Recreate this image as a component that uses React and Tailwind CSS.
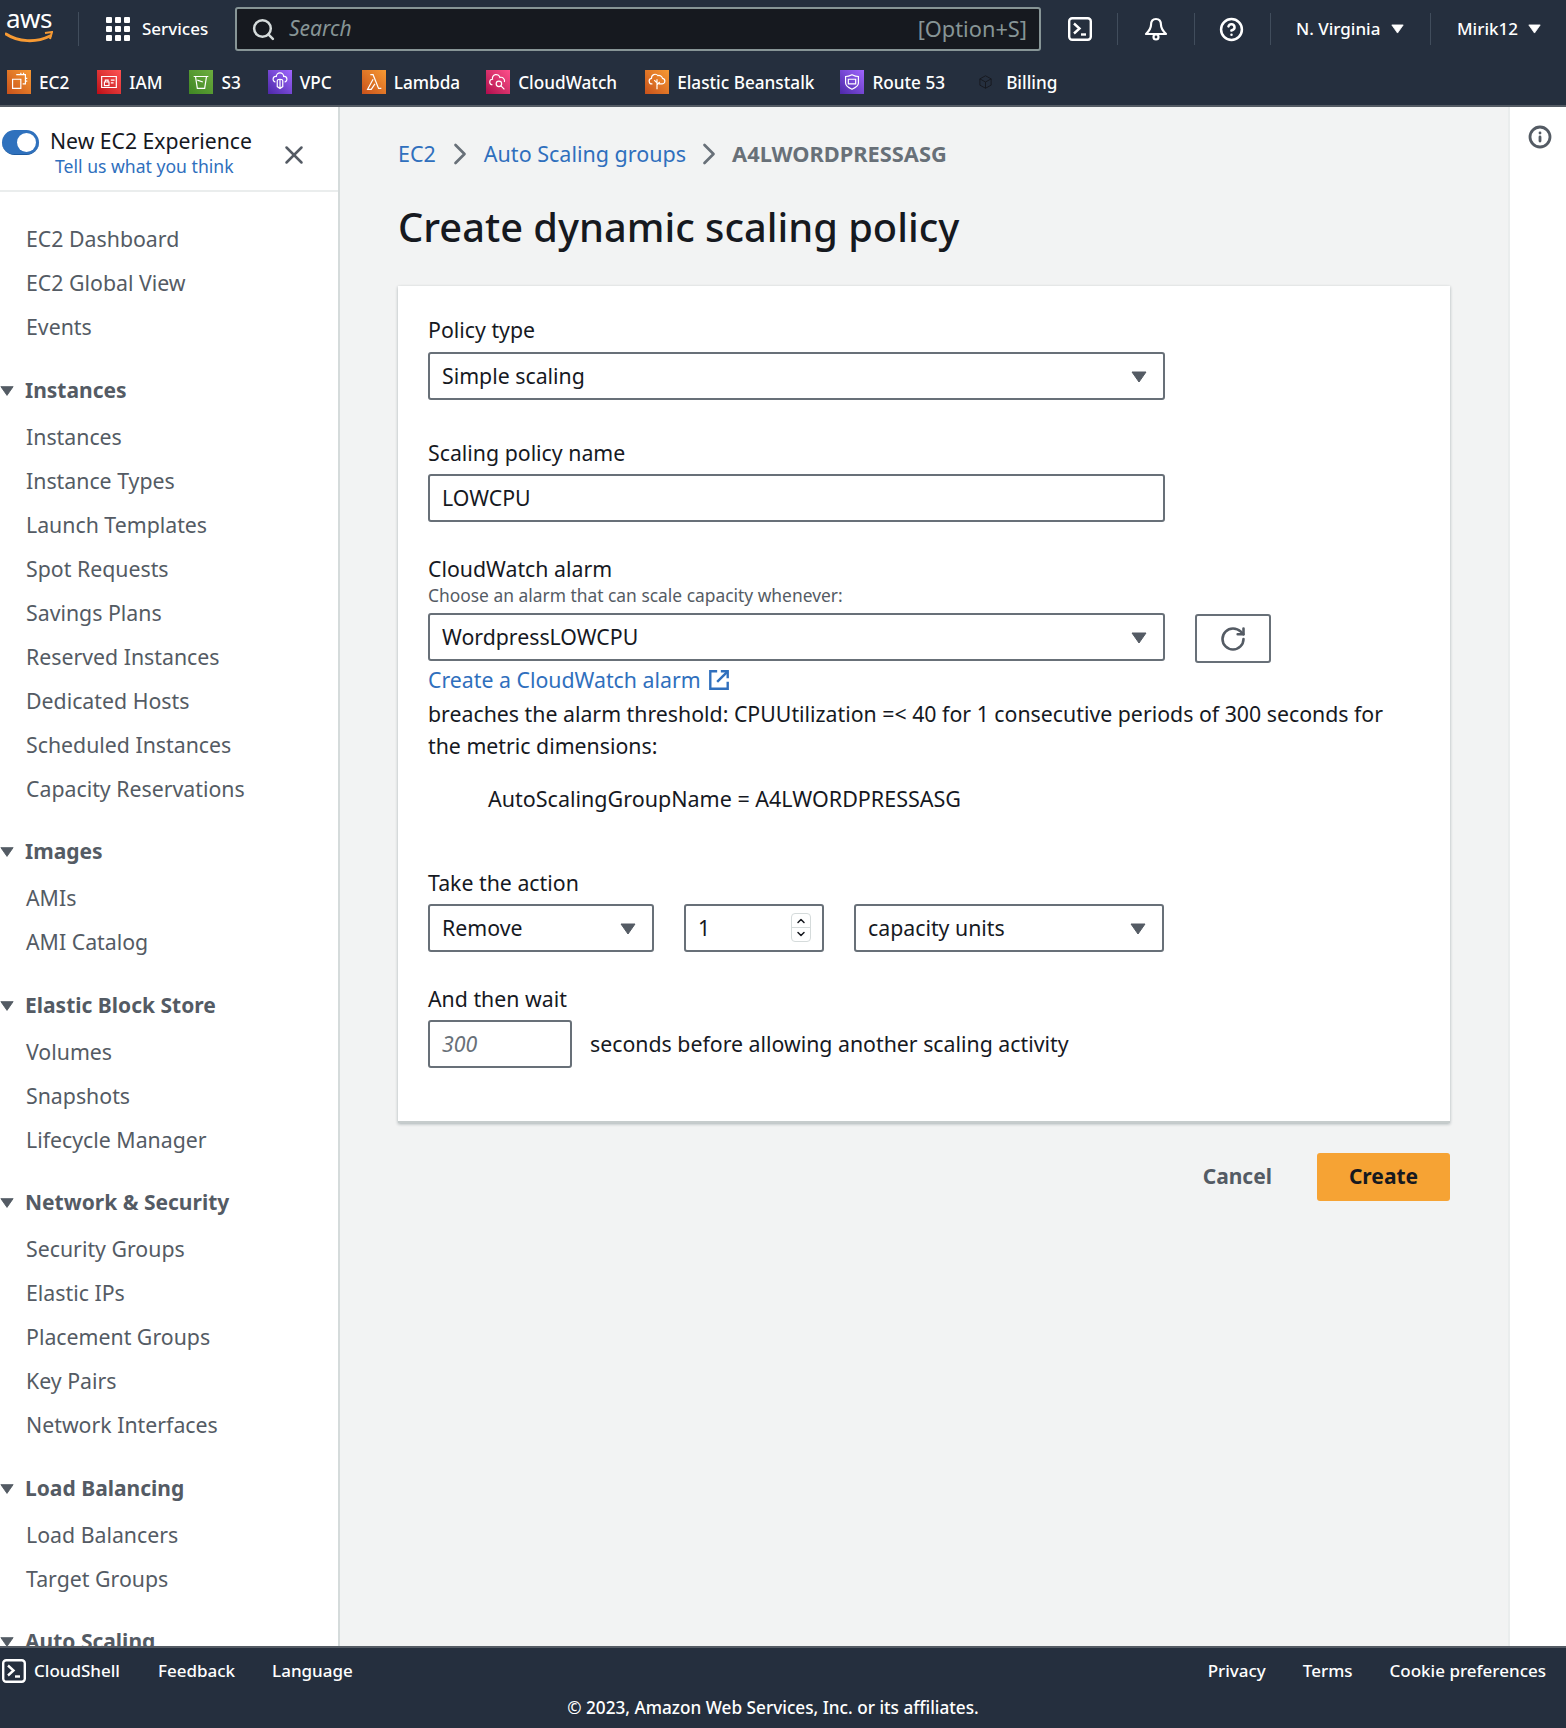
import { Search, X, ChevronRight, RotateCw, Info, CircleHelp, ChevronUp, ChevronDown } from "lucide-react";

const Caret = ({ className = "" }) => (
  <svg viewBox="0 0 16 12" className={className} fill="currentColor">
    <path d="M1 1h14L8 11z" stroke="currentColor" strokeLinejoin="round" />
  </svg>
);

const ConsoleIcon = ({ className = "" }) => (
  <svg viewBox="0 0 24 24" className={className} fill="none" stroke="currentColor" strokeWidth="2.4">
    <rect x="1.2" y="1.2" width="21.6" height="21.6" rx="3" />
    <path d="M6 6.5l5.500 5-5.500 5" />
    <path d="M13 17.500h5" />
  </svg>
);

const BellIcon = ({ className = "" }) => (
  <svg viewBox="0 0 24 24" className={className} fill="none" stroke="currentColor" strokeWidth="2.2" strokeLinejoin="round">
    <path d="M12 2c-3.500 0-5 2.500-5 6 0 4-2 6-5 9h20c-3-3-5-5-5-9 0-3.500-1.500-6-5-6z" />
    <circle cx="12" cy="20" r="2.500" />
  </svg>
);

const ExternalIcon = ({ className = "" }) => (
  <svg viewBox="0 0 24 24" className={className} fill="none" stroke="currentColor" strokeWidth="2.6">
    <path d="M10 2.500H2.500v19h19V14" />
    <path d="M14 2.500h7.500V10" />
    <path d="M21.500 2.500L10 14" />
  </svg>
);

const services = [
  { name: "EC2", box: "from-[#c8511b] to-[#f79a33]", d: "M9 4h10v10h-3M5 9h9v10H5zM14 4V2M17 4V2M21 8h-2M21 11h-2", w: "mr-[28px]" },
  { name: "IAM", box: "from-[#bd0816] to-[#ff5252]", d: "M4 6h16v12H4zM7 12h5v4H7zM8 12v-2h3v2M14 10h4M14 13h3", w: "mr-[27px]" },
  { name: "S3", box: "from-[#3f8624] to-[#6cae3e]", d: "M4 6h16M6 6l2 13h8l2-13M8 10l6 2", w: "mr-[27px]" },
  { name: "VPC", box: "from-[#4d27a8] to-[#a166ff]", d: "M7 12a3 3 0 0 1 1-6 4 4 0 0 1 8 0 3 3 0 0 1 1 6M12 9c-2 0-3 1-3 2v6l3 2 3-2v-6c0-1-1-2-3-2zM12 9v10", w: "mr-[30px]" },
  { name: "Lambda", box: "from-[#c8511b] to-[#f79a33]", d: "M8 4h3l6 15h3M11 9L5 20h4l4-6", w: "mr-[26px]" },
  { name: "CloudWatch", box: "from-[#b0084d] to-[#ff4f8b]", d: "M6 15a3 3 0 0 1 0-6 4 4 0 0 1 8-2 4 4 0 0 1 5 5M10 14a3 3 0 1 0 6 0 3 3 0 0 0-6 0zM15.500 16.500L19 20", w: "mr-[28px]" },
  { name: "Elastic Beanstalk", box: "from-[#c8511b] to-[#f79a33]", d: "M7 14a3 3 0 0 1-1-6 4 4 0 0 1 7-3 4 4 0 0 1 5 3 3 3 0 0 1-1 6h-3M12 9v11M12 13l-3-3M12 15l3-3", w: "mr-[26px]" },
  { name: "Route 53", box: "from-[#4d27a8] to-[#a166ff]", d: "M5 6c3 0 5-1 7-2 2 1 4 2 7 2v7c0 3-3 5-7 7-4-2-7-4-7-7zM8 9h8v5H8z", w: "mr-[33px]" },
];

const nav = [
  { items: ["EC2 Dashboard", "EC2 Global View", "Events"] },
  { title: "Instances", items: ["Instances", "Instance Types", "Launch Templates", "Spot Requests", "Savings Plans", "Reserved Instances", "Dedicated Hosts", "Scheduled Instances", "Capacity Reservations"] },
  { title: "Images", items: ["AMIs", "AMI Catalog"] },
  { title: "Elastic Block Store", items: ["Volumes", "Snapshots", "Lifecycle Manager"] },
  { title: "Network & Security", items: ["Security Groups", "Elastic IPs", "Placement Groups", "Key Pairs", "Network Interfaces"] },
  { title: "Load Balancing", items: ["Load Balancers", "Target Groups"] },
  { title: "Auto Scaling", items: [] },
];

const Sep = ({ className = "" }) => <div className={`w-px h-8 bg-[#414d5c] ${className}`} />;

const TopBar = () => (
  <header className="h-[107px] shrink-0 bg-[#252f3e] border-b-2 border-[#545b64] text-white font-medium">
    <div className="h-[58px] flex items-center">
      <div className="relative w-[78px] h-full">
        <span className="absolute left-[6px] top-[5px] text-[26px] leading-[26px] tracking-[-0.5px] font-normal">aws</span>
        <svg viewBox="0 0 48 14" className="absolute left-[5px] top-[31px] w-[48px] h-[14px]" fill="none">
          <path d="M1 3c12 8 30 9 44 2" stroke="#f79a33" strokeWidth="3" strokeLinecap="round" />
          <path d="M40 2l7-1-2 7" stroke="#f79a33" strokeWidth="2" />
        </svg>
      </div>
      <Sep className="h-[34px]" />
      <div className="grid grid-cols-3 gap-[3px] ml-[27px] w-[24px]">
        {Array.from({ length: 9 }).map((_, i) => (
          <span key={i} className="w-[6px] h-[6px] rounded-[1px] bg-white" />
        ))}
      </div>
      <span className="ml-[12px] w-[66px] text-[17px] whitespace-nowrap">Services</span>
      <div className="ml-[27px] w-[806px] h-[44px] flex items-center justify-between bg-[#16191f] border-2 border-[#879596] rounded-[3px] pl-[14px] pr-[12px] font-normal">
        <div className="flex items-center gap-[13px]">
          <Search size={25} strokeWidth={2.4} className="text-[#d5dbdb]" />
          <span className="italic text-[21px] text-[#879596]">Search</span>
        </div>
        <span className="text-[21.800px] text-[#879596]">[Option+S]</span>
      </div>
      <ConsoleIcon className="w-[24px] h-[24px] ml-[27px]" />
      <Sep className="ml-[25px]" />
      <BellIcon className="w-[24px] h-[24px] ml-[26px]" />
      <Sep className="ml-[26px]" />
      <CircleHelp size={25} strokeWidth={2.4} className="ml-[24px]" />
      <Sep className="ml-[26px]" />
      <span className="ml-[25px] w-[87px] text-[17px] whitespace-nowrap">N. Virginia</span>
      <Caret className="ml-[8px] w-[13px] h-[10px]" />
      <Sep className="ml-[26px]" />
      <span className="ml-[26px] w-[62px] text-[17px] whitespace-nowrap">Mirik12</span>
      <Caret className="ml-[9px] w-[13px] h-[10px]" />
    </div>
    <div className="h-[47px] flex items-center pl-[7px] pt-[2px] text-[17.200px]">
      {services.map((s) => (
        <div key={s.name} className={`flex items-center gap-[8px] ${s.w}`}>
          <span className={`w-[24px] h-[24px] flex items-center justify-center bg-linear-to-tr ${s.box}`}>
            <svg viewBox="0 0 24 24" className="w-[22px] h-[22px]" fill="none" stroke="white" strokeWidth="1.3">
              <path d={s.d} />
            </svg>
          </span>
          <span className="whitespace-nowrap">{s.name}</span>
        </div>
      ))}
      <div className="flex items-center gap-[13px]">
        <svg viewBox="0 0 24 24" className="w-[15px] h-[16px]" fill="none" stroke="#16191f" strokeWidth="1.5">
          <path d="M12 2l9 5v10l-9 5-9-5V7zM3 7l9 5 9-5M12 12v10" />
        </svg>
        <span>Billing</span>
      </div>
    </div>
  </header>
);

const Sidebar = () => (
  <aside className="w-[340px] shrink-0 bg-white border-r-2 border-[#d5dbdb] overflow-hidden">
    <div className="h-[85px] border-b-2 border-[#eaeded] relative">
      <div className="absolute left-[2px] top-[23px] w-[37px] h-[25px] rounded-full bg-[#2f71bd] border-b border-[#1d5a9f]">
        <span className="absolute right-[3px] top-[3px] w-[19px] h-[19px] rounded-full bg-white" />
      </div>
      <div className="absolute left-[50px] top-[20px] text-[21.200px] leading-[28px] text-[#16191f] whitespace-nowrap">New EC2 Experience</div>
      <div className="absolute left-[55px] top-[47px] text-[17.600px] leading-[24px] text-[#2f6fbd] whitespace-nowrap">Tell us what you think</div>
      <X size={30} strokeWidth={2} className="absolute left-[279px] top-[33px] text-[#545b64]" />
    </div>
    <nav className="pt-[25px] text-[#545b64]">
      {nav.map((g, i) => (
        <div key={i} className="mb-[19.500px]">
          {g.title && (
            <div className="h-[44px] mb-[2px] flex items-center font-bold text-[#545b64]">
              <Caret className="w-[14px] h-[12px] mr-[11px]" />
              <span className="text-[21px]">{g.title}</span>
            </div>
          )}
          {g.items.map((it) => (
            <div key={it} className="h-[44px] flex items-center pl-[26px] text-[21.300px] whitespace-nowrap">{it}</div>
          ))}
        </div>
      ))}
    </nav>
  </aside>
);

const Field = ({ className = "", children, caret }) => (
  <div className={`h-[48px] flex items-center justify-between pl-[12px] pr-[16px] bg-white border-2 border-[#687078] rounded-[3px] text-[21.300px] text-[#16191f] ${className}`}>
    <span className="whitespace-nowrap">{children}</span>
    {caret && <Caret className="w-[16px] h-[12px] mt-[2px] text-[#545b64]" />}
  </div>
);

const Label = ({ children, className = "" }) => (
  <div className={`text-[21.300px] leading-[28px] text-[#16191f] ${className}`}>{children}</div>
);

const Main = () => (
  <main className="flex-1 bg-[#f2f3f3] pl-[58px] pr-[58px] pt-[31px]">
    <div className="flex items-center h-[32px] text-[21.500px]">
      <span className="text-[#2f6fbd]">EC2</span>
      <ChevronRight size={36} strokeWidth={1.8} className="text-[#687078] mx-[6px]" />
      <span className="text-[#2f6fbd]">Auto Scaling groups</span>
      <ChevronRight size={36} strokeWidth={1.8} className="text-[#687078] mx-[5px]" />
      <span className="font-bold text-[21.800px] text-[#687078]">A4LWORDPRESSASG</span>
    </div>
    <h1 className="mt-[31px] text-[39.800px] leading-[52px] font-medium text-[#16191f]">Create dynamic scaling policy</h1>
    <section className="mt-[33px] h-[837px] bg-white border-b-2 border-[#c6cccc] shadow-[0_1px_3px_rgba(0,28,36,0.3)] px-[30px] pt-[30px]">
      <Label>Policy type</Label>
      <Field caret className="mt-[8px] w-[737px]">Simple scaling</Field>
      <Label className="mt-[39px]">Scaling policy name</Label>
      <Field className="mt-[7px] w-[737px]">LOWCPU</Field>
      <Label className="mt-[33px]">CloudWatch alarm</Label>
      <div className="text-[17.400px] leading-[24px] text-[#545b64]">Choose an alarm that can scale capacity whenever:</div>
      <div className="mt-[6px] flex items-start gap-[30px]">
        <Field caret className="w-[737px]">WordpressLOWCPU</Field>
        <div className="mt-[1px] w-[76px] h-[49px] flex items-center justify-center border-2 border-[#687078] rounded-[3px]">
          <RotateCw size={28} strokeWidth={2.2} className="text-[#545b64]" />
        </div>
      </div>
      <div className="mt-[2px] flex items-center gap-[7px] text-[21.300px] leading-[30px] text-[#2f6fbd]">
        <span>Create a CloudWatch alarm</span>
        <ExternalIcon className="w-[22px] h-[22px]" />
      </div>
      <p className="mt-[3px] max-w-[980px] text-[21.300px] leading-[32px] text-[#16191f]">
        breaches the alarm threshold: CPUUtilization =&lt; 40 for 1 consecutive periods of 300 seconds for the metric dimensions:
      </p>
      <div className="mt-[21px] ml-[60px] text-[21.500px] leading-[32px] text-[#16191f]">AutoScalingGroupName = A4LWORDPRESSASG</div>
      <Label className="mt-[54px]">Take the action</Label>
      <div className="mt-[7px] flex gap-[30px]">
        <Field caret className="w-[226px]">Remove</Field>
        <div className="relative w-[140px]">
          <Field>1</Field>
          <div className="absolute right-[13px] top-[9px] w-[20px] h-[29px] rounded-[4px] border border-[#d5dbdb] flex flex-col items-center justify-center text-[#16191f]">
            <ChevronUp size={12} strokeWidth={3} />
            <div className="w-full h-px bg-[#d5dbdb]" />
            <ChevronDown size={12} strokeWidth={3} />
          </div>
        </div>
        <Field caret className="w-[310px]">capacity units</Field>
      </div>
      <Label className="mt-[33px]">And then wait</Label>
      <div className="mt-[7px] flex items-center gap-[18px]">
        <div className="w-[144px] h-[48px] flex items-center pl-[12px] bg-white border-2 border-[#687078] rounded-[3px] italic text-[21.300px] text-[#687078]">300</div>
        <span className="text-[21.300px] text-[#16191f]">seconds before allowing another scaling activity</span>
      </div>
    </section>
    <div className="mt-[30px] flex items-center justify-end">
      <span className="font-bold text-[21px] text-[#545b64] mr-[45px]">Cancel</span>
      <div className="w-[133px] h-[48px] flex items-center justify-center rounded-[3px] bg-[#f6a334] font-bold text-[21px] text-[#16191f]">Create</div>
    </div>
  </main>
);

const Footer = () => (
  <footer className="relative h-[82px] shrink-0 bg-[#252f3e] border-t-2 border-[#545b64] text-white text-[17px] font-medium">
    <div className="flex items-center justify-between h-[46px] pl-[2px] pr-[20px]">
      <div className="flex items-center">
        <ConsoleIcon className="w-[24px] h-[24px]" />
        <span className="ml-[8px]">CloudShell</span>
        <span className="ml-[38px]">Feedback</span>
        <span className="ml-[37px]">Language</span>
      </div>
      <div className="flex items-center gap-[37px]">
        <span>Privacy</span>
        <span>Terms</span>
        <span>Cookie preferences</span>
      </div>
    </div>
    <div className="mt-[2px] text-center pr-[20px] text-[17.200px] leading-[24px]">© 2023, Amazon Web Services, Inc. or its affiliates.</div>
  </footer>
);

export default function App() {
  return (
    <div className="w-[1566px] h-[1728px] flex flex-col overflow-hidden font-['Noto_Sans',sans-serif]">
      <TopBar />
      <div className="flex-1 min-h-0 flex">
        <Sidebar />
        <Main />
        <aside className="w-[58px] shrink-0 bg-white border-l-2 border-[#eaeded] pt-[18px] pl-[18px]">
          <Info size={24} strokeWidth={2.8} className="text-[#545b64]" />
        </aside>
      </div>
      <Footer />
    </div>
  );
}
